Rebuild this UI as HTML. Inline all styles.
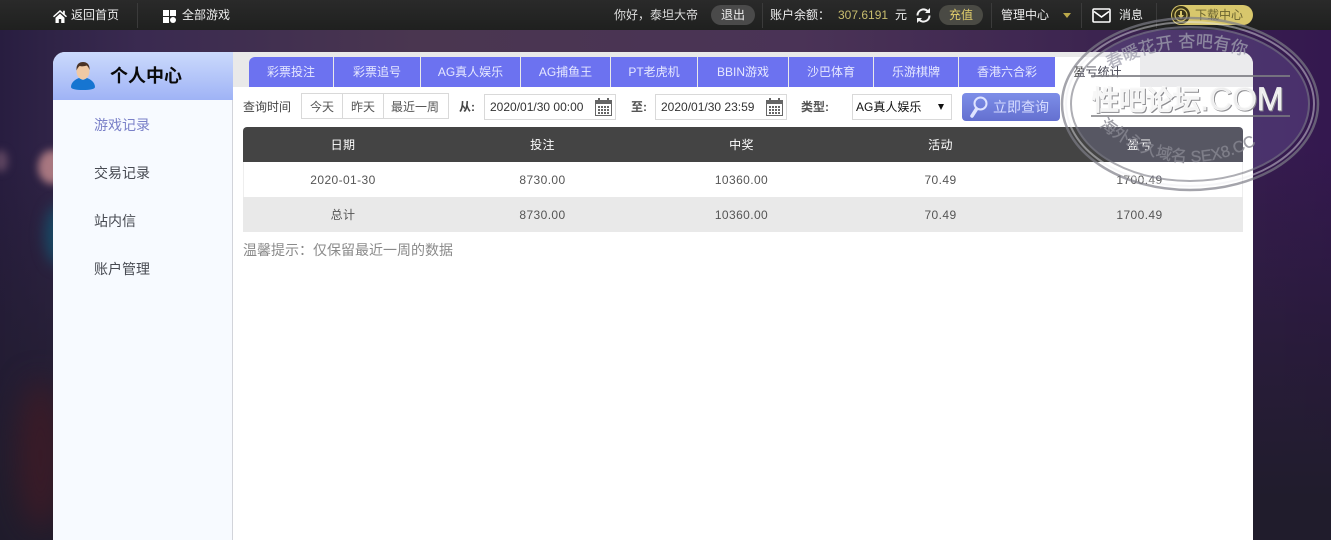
<!DOCTYPE html>
<html lang="zh"><head><meta charset="utf-8"><title>个人中心</title>
<style>
*{box-sizing:border-box}
html{width:1331px;height:540px;overflow:hidden}
html,body{margin:0;padding:0}
body{width:1331px;height:540px;position:relative;overflow:hidden;background:#241b3a;font:12px/1 "Liberation Sans","WenQuanYi Zen Hei","Noto Sans CJK SC",sans-serif;color:#444}
.a{position:absolute;white-space:nowrap}
.bg{position:absolute;left:0;top:30px;width:1331px;height:510px;background:linear-gradient(rgba(32,28,44,0) 120px,rgba(32,28,44,.55) 300px,#201c2c 470px),linear-gradient(90deg,#281d40 0,#2f2346 50px,#3a2a50 140px,#4a3650 420px,#4a3356 800px,#3c2450 1100px,#34184f 1331px)}
.blob{position:absolute;border-radius:50%;filter:blur(7px)}
.top{position:absolute;left:0;top:0;width:1331px;height:30px;background:linear-gradient(#2a2a2a,#1f201f);color:#eee}
.top .a{top:9px}
.sep{position:absolute;top:3px;width:1px;height:25px;background:#3b3b3b}
.panel{position:absolute;left:53px;top:52px;width:1200px;height:488px;background:#fff;border-radius:12px 12px 0 0;overflow:hidden}
.side{position:absolute;left:0;top:48px;width:180px;height:440px;background:#f7faff;border-right:1px solid #d2d4da}
.head{position:absolute;left:0;top:0;width:180px;height:48px;background:linear-gradient(#cbdafc,#9fb3f6)}
.band{position:absolute;left:180px;top:0;width:1020px;height:35px;background:#e9e9e9}
.tab{position:absolute;top:5px;height:30px;background:#6c72f0;color:#e6e8ff;text-align:center;line-height:30px}
.menu{position:absolute;left:41px;font-size:14px;color:#474a52}
.box{position:absolute;background:#fff;border:1px solid #d9d9d9;height:26px}
.tr{position:absolute;left:243px;width:1000px;height:35px;display:flex;line-height:36px;text-align:center}
.tr div{width:199px;letter-spacing:.4px}
.tr div:first-child{width:200px}
</style></head><body>
<div class="bg"></div>
<div class="blob" style="left:-6px;top:150px;width:14px;height:22px;background:#5e4560;filter:blur(4px)"></div>
<div class="blob" style="left:38px;top:150px;width:28px;height:34px;background:#a87780;filter:blur(4px)"></div>
<div class="blob" style="left:45px;top:205px;width:28px;height:60px;background:#174a66"></div>
<div class="blob" style="left:18px;top:380px;width:45px;height:150px;background:#3a1b27;filter:blur(14px)"></div>

<div class="top">
<svg class="a" style="left:53px;top:10px" width="14" height="13" viewBox="0 0 14 13"><path fill="#fff" d="M7 0 0 6.300l1 1L7 2l6 5.300 1-1-2.200-2V.8h-1.700v2L7 0zM2.500 7.800V13h3.300V9h2.400v4h3.300V7.800L7 3.600z"/></svg>
<span class="a" style="left:71px">返回首页</span>
<div class="sep" style="left:137px"></div>
<svg class="a" style="left:163px;top:10px" width="13" height="13" viewBox="0 0 13 13"><path fill="#fff" d="M0 0h6v6H0zM7 0h6v6H7zM0 7h6v6H0z"/><circle cx="10" cy="10" r="3" fill="#fff"/></svg>
<span class="a" style="left:182px">全部游戏</span>
<span class="a" style="left:614px;color:#ddd">你好，泰坦大帝</span>
<div class="a" style="left:711px;top:5px;width:44px;height:20px;border-radius:10px;background:#4a4a4a;text-align:center;line-height:20px;color:#eee">退出</div>
<div class="sep" style="left:762px"></div>
<span class="a" style="left:770px">账户余额：</span>
<span class="a" style="left:838px;color:#c8bd6e">307.6191</span>
<span class="a" style="left:895px">元</span>
<svg class="a" style="left:915px;top:7px" width="17" height="17" viewBox="0 0 17 17"><path fill="none" stroke="#f2f2f2" stroke-width="2" d="M2.500 8.500A6 6 0 0 1 12.500 4M14.500 8.500A6 6 0 0 1 4.500 13"/><path fill="#f2f2f2" d="M15 1v5h-5zM2 16v-5h5z"/></svg>
<div class="a" style="left:939px;top:5px;width:44px;height:20px;border-radius:10px;background:#4a4a44;text-align:center;line-height:20px;color:#e3cf6c">充值</div>
<div class="sep" style="left:991px"></div>
<span class="a" style="left:1001px">管理中心</span>
<div class="a" style="left:1063px;top:13px;border:4px solid transparent;border-top:5px solid #bba94a;border-bottom:0"></div>
<div class="sep" style="left:1081px"></div>
<svg class="a" style="left:1092px;top:8px" width="19" height="15" viewBox="0 0 19 15"><rect x="1" y="1" width="17" height="13" rx="1" fill="none" stroke="#fff" stroke-width="1.600"/><path fill="none" stroke="#fff" stroke-width="1.600" d="M2 3.500 9.500 9 17 3.500"/></svg>
<span class="a" style="left:1119px">消息</span>
<div class="sep" style="left:1156px"></div>
<div class="a" style="left:1171px;top:5px;width:82px;height:20px;border-radius:10px;background:#d8c76c;color:#6a6330;line-height:20px;padding-left:24px">下载中心</div>
<svg class="a" style="left:1172px;top:6px" width="18" height="18" viewBox="0 0 18 18"><circle cx="9" cy="9" r="9" fill="#3a3518"/><circle cx="9" cy="9" r="6" fill="none" stroke="#d8c76c" stroke-width="1.200"/><path fill="#d8c76c" d="M8 5h2v4h2l-3 4-3-4h2z"/></svg>
</div>

<div class="panel">
<div class="band"></div>
<div class="head"></div>
<svg class="a" style="left:17px;top:9px" width="26" height="29" viewBox="0 0 26 29"><path fill="#1675d1" d="M1 26c0-5 5-8 8-9l4 2 4-2c3 1 8 4 8 9 0 2-5 3-12 3S1 28 1 26z"/><ellipse cx="13" cy="10" rx="6.500" ry="8.500" fill="#f0c9a4"/><path fill="#4a3326" d="M6.500 9C6 3 9.500 1 13 1s7 2 6.500 8c-1-3-2-4-3-4.500-2 1-6 1-7 .5-1 1-2 2-3 4.500z"/></svg>
<span class="a" style="left:57px;top:15px;font-size:18px;font-weight:bold;color:#0a0a0a">个人中心</span>
<div class="side">
<span class="menu a" style="top:18px;color:#7a80c8">游戏记录</span>
<span class="menu a" style="top:66px">交易记录</span>
<span class="menu a" style="top:114px">站内信</span>
<span class="menu a" style="top:162px">账户管理</span>
</div>
<div class="tab" style="left:196px;width:84px;border-radius:6px 0 0 0">彩票投注</div>
<div class="tab" style="left:281px;width:86px">彩票追号</div>
<div class="tab" style="left:368px;width:99px">AG真人娱乐</div>
<div class="tab" style="left:468px;width:89px">AG捕鱼王</div>
<div class="tab" style="left:558px;width:86px">PT老虎机</div>
<div class="tab" style="left:645px;width:90px">BBIN游戏</div>
<div class="tab" style="left:736px;width:84px">沙巴体育</div>
<div class="tab" style="left:821px;width:84px">乐游棋牌</div>
<div class="tab" style="left:906px;width:96px">香港六合彩</div>
<div class="tab" style="left:1002px;width:85px;background:#fff;color:#333">盈亏统计</div>
</div>

<span class="a" style="left:243px;top:101px;color:#444">查询时间</span>
<div class="box" style="left:301px;top:93px;width:148px"></div>
<div class="a" style="left:342px;top:94px;width:1px;height:24px;background:#d9d9d9"></div>
<div class="a" style="left:383px;top:94px;width:1px;height:24px;background:#d9d9d9"></div>
<span class="a" style="left:310px;top:101px;color:#555">今天</span>
<span class="a" style="left:351px;top:101px;color:#555">昨天</span>
<span class="a" style="left:391px;top:101px;color:#555">最近一周</span>
<span class="a" style="left:459px;top:101px;font-weight:bold">从:</span>
<div class="box" style="left:484px;top:94px;width:132px"></div>
<span class="a" style="left:490px;top:101px;color:#333">2020/01/30 00:00</span>
<svg class="a" style="left:595px;top:98px" width="17" height="18" viewBox="0 0 17 18"><rect x=".5" y="2.500" width="16" height="15" fill="#fff" stroke="#666"/><path fill="#666" d="M0 3h17v3H0zM3 0h2v4H3zM12 0h2v4h-2zM3 8h2v2H3zM6 8h2v2H6zM9 8h2v2H9zM12 8h2v2h-2zM3 11h2v2H3zM6 11h2v2H6zM9 11h2v2H9zM12 11h2v2h-2zM3 14h2v2H3zM6 14h2v2H6zM9 14h2v2H9zM12 14h2v2h-2z"/></svg>
<span class="a" style="left:631px;top:101px;font-weight:bold;color:#555">至:</span>
<div class="box" style="left:655px;top:94px;width:132px"></div>
<span class="a" style="left:661px;top:101px;color:#333">2020/01/30 23:59</span>
<svg class="a" style="left:766px;top:98px" width="17" height="18" viewBox="0 0 17 18"><rect x=".5" y="2.500" width="16" height="15" fill="#fff" stroke="#666"/><path fill="#666" d="M0 3h17v3H0zM3 0h2v4H3zM12 0h2v4h-2zM3 8h2v2H3zM6 8h2v2H6zM9 8h2v2H9zM12 8h2v2h-2zM3 11h2v2H3zM6 11h2v2H6zM9 11h2v2H9zM12 11h2v2h-2zM3 14h2v2H3zM6 14h2v2H6zM9 14h2v2H9zM12 14h2v2h-2z"/></svg>
<span class="a" style="left:801px;top:101px;font-weight:bold;color:#555">类型:</span>
<div class="box" style="left:852px;top:94px;width:100px"></div>
<span class="a" style="left:856px;top:101px;color:#111">AG真人娱乐</span>
<div class="a" style="left:938px;top:104px;border:3.500px solid transparent;border-top:6px solid #111;border-bottom:0"></div>
<div class="a" style="left:962px;top:93px;width:98px;height:28px;border-radius:4px;background:linear-gradient(#7d8ee8,#6470d0);color:#d6dcff;font-size:14px;line-height:28px;padding-left:31px">立即查询</div>
<svg class="a" style="left:969px;top:96px" width="19" height="22" viewBox="0 0 19 22"><circle cx="11.500" cy="7.500" r="6" fill="none" stroke="#dfe4ff" stroke-width="2"/><path stroke="#dfe4ff" stroke-width="3.500" stroke-linecap="round" d="M7.500 13 3 20"/></svg>

<div class="a" style="left:243px;top:127px;width:1000px;height:35px;background:#444;border-radius:4px 4px 0 0"></div>
<div class="tr" style="top:127px;color:#fff"><div>日期</div><div>投注</div><div>中奖</div><div>活动</div><div>盈亏</div></div>
<div class="a" style="left:243px;top:162px;width:1000px;height:35px;background:#fff;border-left:1px solid #eee;border-right:1px solid #eee"></div>
<div class="tr" style="top:162px;color:#555"><div>2020-01-30</div><div>8730.00</div><div>10360.00</div><div>70.49</div><div>1700.49</div></div>
<div class="a" style="left:243px;top:197px;width:1000px;height:35px;background:#e9e9e9"></div>
<div class="tr" style="top:197px;color:#555"><div>总计</div><div>8730.00</div><div>10360.00</div><div>70.49</div><div>1700.49</div></div>
<span class="a" style="left:243px;top:243px;font-size:14px;color:#8a8a8a">温馨提示：仅保留最近一周的数据</span>

<svg class="a" style="left:1050px;top:10px;mix-blend-mode:screen" width="281" height="190" viewBox="0 0 281 190">
<ellipse cx="140" cy="94" rx="120" ry="78" fill="#1a1a2a"/>
</svg>
<svg class="a" style="left:1050px;top:10px" width="281" height="190" viewBox="0 0 281 190">
<defs><path id="t1" d="M58 60Q142 14 228 60"/><path id="t2" d="M44 112Q140 192 240 112"/></defs>
<ellipse cx="140" cy="94" rx="128" ry="86" fill="none" stroke="rgba(125,125,135,.7)" stroke-width="2.500"/>
<ellipse cx="140" cy="94" rx="124" ry="82" fill="none" stroke="rgba(235,235,240,.45)" stroke-width="2"/>
<ellipse cx="140" cy="94" rx="119" ry="77" fill="none" stroke="rgba(120,120,130,.6)" stroke-width="2"/>
<path d="M41 66H240" stroke="rgba(125,125,130,.85)" stroke-width="2"/>
<path d="M41 106H240" stroke="rgba(125,125,130,.75)" stroke-width="2"/>
<text font-family="Liberation Sans,WenQuanYi Zen Hei,sans-serif" font-size="17" fill="rgba(160,160,175,.75)" stroke="rgba(160,160,175,.4)" stroke-width=".5"><textPath href="#t1" startOffset="1%">春暖花开 杏吧有你</textPath></text>
<g style="filter:drop-shadow(1px 1px 0 #8c8c90)">
<text x="42" y="100" font-family="Liberation Sans,WenQuanYi Zen Hei,sans-serif" font-weight="bold" fill="#f7f7f7" fill-opacity=".9" stroke="#f7f7f7" stroke-width=".7"><tspan font-size="27">性吧论坛</tspan><tspan font-size="32" font-weight="normal">.COM</tspan></text>
</g>
<text font-family="Liberation Sans,WenQuanYi Zen Hei,sans-serif" font-size="16" fill="rgba(135,135,145,.8)" stroke="rgba(135,135,145,.5)" stroke-width=".5"><textPath href="#t2" startOffset="3%">海外永久域名 SEX8.CC</textPath></text>
</svg>
</body></html>
